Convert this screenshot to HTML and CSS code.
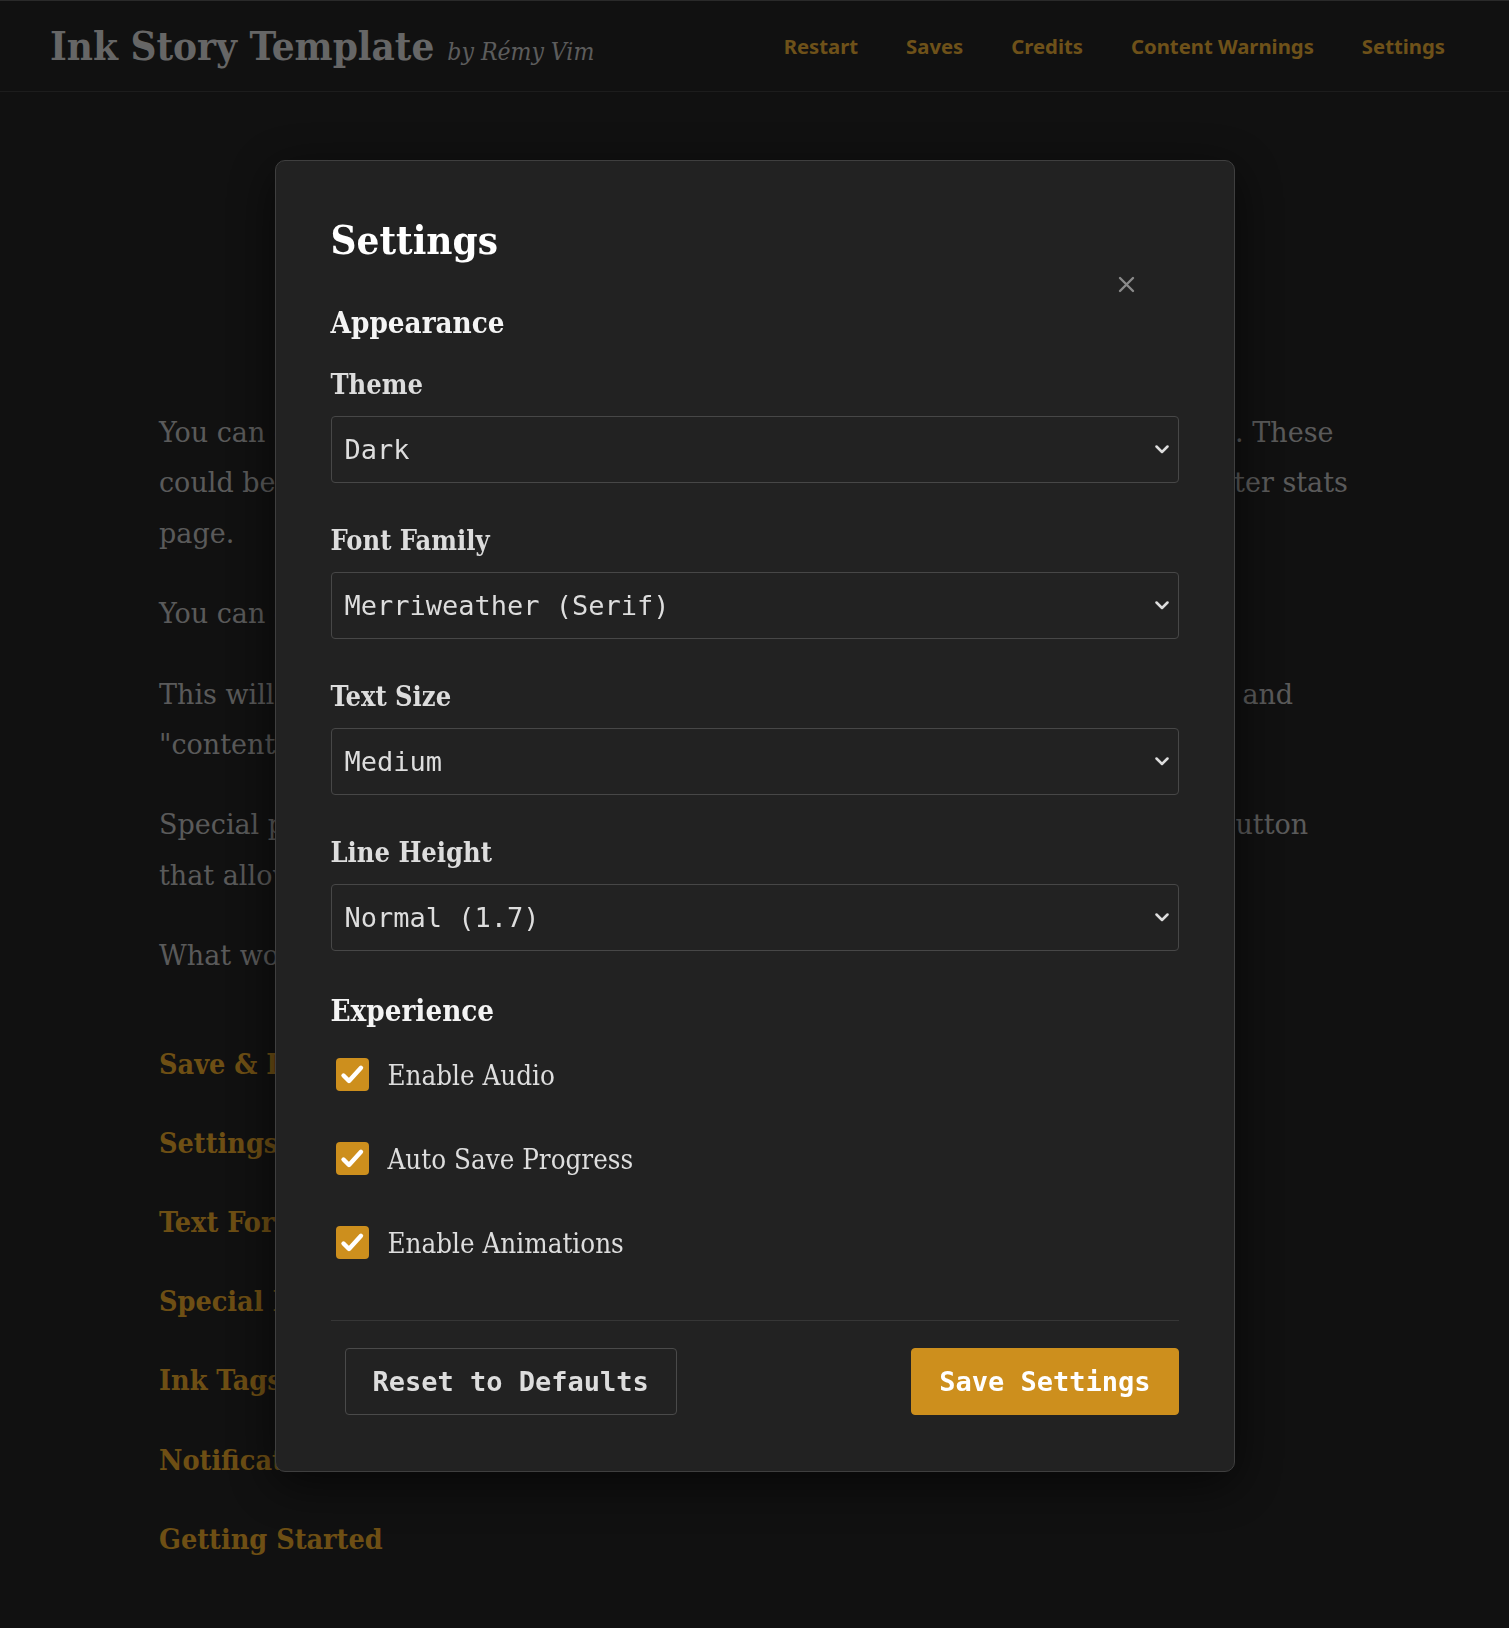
FILE: index.html
```html
<!DOCTYPE html>
<html lang="en">
<head>
<meta charset="utf-8">
<title>Ink Story Template</title>
<link rel="stylesheet" href="styles.css">
</head>
<body>
<header class="site-header">
  <div class="brand">
    <h1 class="brand-title">Ink Story Template</h1>
    <span class="brand-by">by Rémy Vim</span>
  </div>
  <nav class="site-nav">
    <a class="nav-link" href="#">Restart</a>
    <a class="nav-link" href="#">Saves</a>
    <a class="nav-link" href="#">Credits</a>
    <a class="nav-link" href="#">Content Warnings</a>
    <a class="nav-link" href="#">Settings</a>
  </nav>
</header>

<main class="story">
  <p class="story-p">You can create special pages that appear in the menu by using some knot tags. These<br>could be used for credits, content warnings, an inventory, a map or the character stats<br>page.</p>
  <p class="story-p">You can open any of these special pages from the menu at the top.</p>
  <p class="story-p">This will present every single special page that you have defined in your story, and<br>"content warnings" will open automatically on first visit.</p>
  <p class="story-p">Special pages can also be opened from within your story itself with a special button<br>that allows the reader to jump straight there.</p>
  <p class="story-p">What would you like to learn about?</p>
  <div class="choices">
    <a class="choice" href="#">Save &amp; Load</a>
    <a class="choice" href="#">Settings</a>
    <a class="choice" href="#">Text Formatting</a>
    <a class="choice" href="#">Special Pages</a>
    <a class="choice" href="#">Ink Tags</a>
    <a class="choice" href="#">Notifications</a>
    <a class="choice" href="#">Getting Started</a>
  </div>
</main>

<div class="overlay">
  <div class="modal">
    <h2 class="modal-title">Settings</h2>
    <button class="modal-close" type="button" aria-label="Close">
      <svg width="17" height="17" viewBox="0 0 17 17"><path d="M2 2 L15 15 M15 2 L2 15" stroke="#8a8a8a" stroke-width="2.4" stroke-linecap="round" fill="none"/></svg>
    </button>

    <section class="section">
      <h3 class="section-title">Appearance</h3>
      <div class="field">
        <label class="field-label">Theme</label>
        <div class="select-wrap">
          <select class="select"><option>Dark</option></select>
          <svg class="chevron" width="14" height="9" viewBox="0 0 14 9"><path d="M1.5 1.5 L7 7 L12.5 1.5" stroke="#dddddd" stroke-width="2.5" stroke-linecap="round" stroke-linejoin="round" fill="none"/></svg>
        </div>
      </div>
      <div class="field">
        <label class="field-label">Font Family</label>
        <div class="select-wrap">
          <select class="select"><option>Merriweather (Serif)</option></select>
          <svg class="chevron" width="14" height="9" viewBox="0 0 14 9"><path d="M1.5 1.5 L7 7 L12.5 1.5" stroke="#dddddd" stroke-width="2.5" stroke-linecap="round" stroke-linejoin="round" fill="none"/></svg>
        </div>
      </div>
      <div class="field">
        <label class="field-label">Text Size</label>
        <div class="select-wrap">
          <select class="select"><option>Medium</option></select>
          <svg class="chevron" width="14" height="9" viewBox="0 0 14 9"><path d="M1.5 1.5 L7 7 L12.5 1.5" stroke="#dddddd" stroke-width="2.5" stroke-linecap="round" stroke-linejoin="round" fill="none"/></svg>
        </div>
      </div>
      <div class="field">
        <label class="field-label">Line Height</label>
        <div class="select-wrap">
          <select class="select"><option>Normal (1.7)</option></select>
          <svg class="chevron" width="14" height="9" viewBox="0 0 14 9"><path d="M1.5 1.5 L7 7 L12.5 1.5" stroke="#dddddd" stroke-width="2.5" stroke-linecap="round" stroke-linejoin="round" fill="none"/></svg>
        </div>
      </div>
    </section>

    <section class="section section-exp">
      <h3 class="section-title">Experience</h3>
      <div class="checks">
        <label class="check-row">
          <span class="check-box"><svg width="32" height="32" viewBox="0 0 32 32"><path d="M7.5 16.5 L13 22 L25 8.8" stroke="#ffffff" stroke-width="4.4" stroke-linecap="round" stroke-linejoin="round" fill="none"/></svg></span>
          <span class="check-label">Enable Audio</span>
        </label>
        <label class="check-row">
          <span class="check-box"><svg width="32" height="32" viewBox="0 0 32 32"><path d="M7.5 16.5 L13 22 L25 8.8" stroke="#ffffff" stroke-width="4.4" stroke-linecap="round" stroke-linejoin="round" fill="none"/></svg></span>
          <span class="check-label">Auto Save Progress</span>
        </label>
        <label class="check-row">
          <span class="check-box"><svg width="32" height="32" viewBox="0 0 32 32"><path d="M7.5 16.5 L13 22 L25 8.8" stroke="#ffffff" stroke-width="4.4" stroke-linecap="round" stroke-linejoin="round" fill="none"/></svg></span>
          <span class="check-label">Enable Animations</span>
        </label>
      </div>
    </section>

    <div class="modal-footer">
      <button class="btn btn-reset" type="button">Reset to Defaults</button>
      <button class="btn btn-save" type="button">Save Settings</button>
    </div>
  </div>
</div>
</body>
</html>
```

FILE: styles.css
```css
* { box-sizing: border-box; }

html, body {
  margin: 0;
  padding: 0;
}

body {
  background: #222222;
  color: #b4b4b4;
  font-family: "DejaVu Serif Condensed", "DejaVu Serif", serif;
  min-height: 1628px;
}

.site-header {
  height: 92px;
  border-top: 1px solid #555555;
  border-bottom: 1px solid #3a3a3a;
  padding: 0 48px 0 50px;
  display: flex;
  align-items: center;
  justify-content: space-between;
}

.brand {
  display: flex;
  align-items: baseline;
  gap: 13px;
}

.brand-title {
  margin: 0;
  font-size: 40px;
  font-weight: 700;
  color: #cccccc;
  line-height: 1.2;
}

.brand-by {
  font-style: italic;
  font-size: 24.5px;
  color: #b8b8b8;
}

.site-nav {
  display: flex;
  gap: 16px;
}

.nav-link {
  font-family: "Noto Sans", sans-serif;
  font-weight: 700;
  font-size: 20.3px;
  color: #dda232;
  text-decoration: none;
  padding: 0 16px;
}

.story {
  max-width: 1191px;
  margin: 0 auto;
  padding-top: 316px;
}

.story-p {
  margin: 0 0 30px;
  font-family: "DejaVu Serif", serif;
  font-size: 27px;
  line-height: 50.4px;
  white-space: nowrap;
}

.choices {
  margin-top: 57px;
  display: flex;
  flex-direction: column;
  gap: 28.8px;
}

.choice {
  font-size: 28.5px;
  line-height: 50.4px;
  font-weight: 700;
  color: #dc9e28;
  text-decoration: none;
}

.overlay {
  position: fixed;
  inset: 0;
  padding-top: 3px;
  background: rgba(0, 0, 0, 0.5);
  display: flex;
  align-items: center;
  justify-content: center;
}

.modal {
  position: relative;
  width: 960px;
  padding: 55px 55px 56px;
  background: #222222;
  border: 1px solid #3f3f3f;
  border-radius: 10px;
  box-shadow: 0 12px 48px rgba(0, 0, 0, 0.6);
  color: #dddddd;
}

.modal-title {
  margin: 0 0 39px;
  font-size: 40px;
  line-height: 48px;
  font-weight: 700;
  color: #ffffff;
}

.modal-close {
  position: absolute;
  top: 115px;
  right: 99px;
  width: 17px;
  height: 17px;
  padding: 0;
  border: 0;
  background: none;
  display: block;
}

.modal-close svg { display: block; }

.section-title {
  margin: 0 0 24px;
  font-size: 29.3px;
  line-height: 40px;
  font-weight: 700;
  color: #f4f4f4;
}

.field {
  margin-bottom: 40px;
}

.field-label {
  display: block;
  margin-bottom: 13px;
  font-size: 27px;
  line-height: 36px;
  font-weight: 700;
  color: #dddddd;
}

.select-wrap {
  position: relative;
}

.select {
  display: block;
  width: 100%;
  height: 67px;
  padding: 0 40px 0 13px;
  appearance: none;
  -webkit-appearance: none;
  background: #222222;
  border: 1px solid #474747;
  border-radius: 4px;
  color: #dddddd;
  font-family: "DejaVu Sans Mono", monospace;
  font-size: 27px;
}

.chevron {
  position: absolute;
  right: 10px;
  top: 29px;
  pointer-events: none;
}

.checks {
  margin-top: 7px;
  display: flex;
  flex-direction: column;
  gap: 44px;
}

.check-row {
  display: flex;
  align-items: center;
  height: 40px;
  padding-left: 5px;
  gap: 19px;
}

.check-box {
  width: 33px;
  height: 33px;
  border-radius: 4px;
  background: #cd8f1d;
  display: flex;
  align-items: center;
  justify-content: center;
}

.check-box svg { display: block; }

.check-label {
  font-size: 27.5px;
  line-height: 40px;
  color: #dddddd;
}

.section-exp {
  margin-bottom: 57px;
}

.modal-footer {
  border-top: 1px solid #363636;
  padding-top: 27px;
  display: flex;
  justify-content: space-between;
}

.btn {
  height: 67px;
  padding: 0 27px;
  border-radius: 4px;
  font-family: "DejaVu Sans Mono", monospace;
  font-weight: 700;
  font-size: 27px;
}

.btn-reset {
  margin-left: 14px;
  background: transparent;
  border: 1px solid #4a4a4a;
  color: #dddddd;
}

.btn-save {
  background: #cd8f1d;
  border: 1px solid #cd8f1d;
  color: #ffffff;
}
```
